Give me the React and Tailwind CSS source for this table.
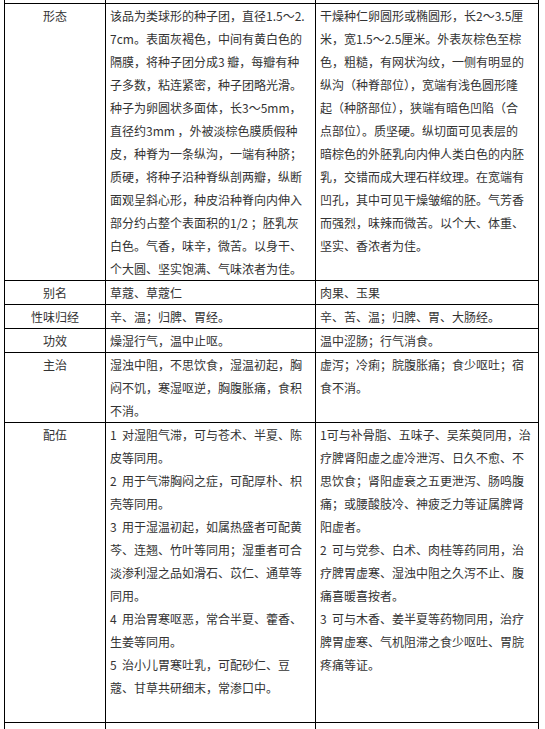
import React from 'react';

const rows = [
  {
    label: '形态',
    h: 'h-[276px]',
    mid: [
      '该品为类球形的种子团，直径1.5～2.',
      '7cm。表面灰褐色，中间有黄白色的',
      '隔膜，将种子团分成3 瓣，每瓣有种',
      '子多数，粘连紧密，种子团略光滑。',
      '种子为卵圆状多面体，长3～5mm，',
      '直径约3mm ，外被淡棕色膜质假种',
      '皮，种脊为一条纵沟，一端有种脐；',
      '质硬，将种子沿种脊纵剖两瓣，纵断',
      '面观呈斜心形，种皮沿种脊向内伸入',
      '部分约占整个表面积的1/2 ；胚乳灰',
      '白色。气香，味辛，微苦。以身干、',
      '个大圆、坚实饱满、气味浓者为佳。',
    ],
    right: [
      '干燥种仁卵圆形或椭圆形，长2～3.5厘',
      '米，宽1.5～2.5厘米。外表灰棕色至棕',
      '色，粗糙，有网状沟纹，一侧有明显的',
      '纵沟（种脊部位），宽端有浅色圆形隆',
      '起（种脐部位），狭端有暗色凹陷（合',
      '点部位）。质坚硬。纵切面可见表层的',
      '暗棕色的外胚乳向内伸人类白色的内胚',
      '乳，交错而成大理石样纹理。在宽端有',
      '凹孔，其中可见干燥皱缩的胚。气芳香',
      '而强烈，味辣而微苦。以个大、体重、',
      '坚实、香浓者为佳。',
    ],
  },
  { label: '别名', h: 'h-[23px]', mid: ['草蔻、草蔻仁'], right: ['肉果、玉果'] },
  {
    label: '性味归经',
    h: 'h-[23px]',
    mid: ['辛、温；归脾、胃经。'],
    right: ['辛、苦、温；归脾、胃、大肠经。'],
  },
  {
    label: '功效',
    h: 'h-[23px]',
    mid: ['燥湿行气，温中止呕。'],
    right: ['温中涩肠；行气消食。'],
  },
  {
    label: '主治',
    h: 'h-[69px]',
    mid: [
      '湿浊中阻，不思饮食，湿温初起，胸',
      '闷不饥，寒湿呕逆，胸腹胀痛，食积',
      '不消。',
    ],
    right: ['虚泻；冷痢；脘腹胀痛；食少呕吐；宿', '食不消。'],
  },
  {
    label: '配伍',
    h: 'h-[299px]',
    mid: [
      '1  对湿阻气滞，可与苍术、半夏、陈',
      '皮等同用。',
      '2  用于气滞胸闷之症，可配厚朴、枳',
      '壳等同用。',
      '3  用于湿温初起，如属热盛者可配黄',
      '芩、连翘、竹叶等同用；湿重者可合',
      '淡渗利湿之品如滑石、苡仁、通草等',
      '同用。',
      '4  用治胃寒呕恶，常合半夏、藿香、',
      '生姜等同用。',
      '5  治小儿胃寒吐乳，可配砂仁、豆',
      '蔻、甘草共研细末，常渗口中。',
    ],
    right: [
      '1可与补骨脂、五味子、吴茱萸同用，治',
      '疗脾肾阳虚之虚冷泄泻、日久不愈、不',
      '思饮食；肾阳虚衰之五更泄泻、肠鸣腹',
      '痛；或腰酸肢冷、神疲乏力等证属脾肾',
      '阳虚者。',
      '2  可与党参、白术、肉桂等药同用，治',
      '疗脾胃虚寒、湿浊中阻之久泻不止、腹',
      '痛喜暖喜按者。',
      '3  可与木香、姜半夏等药物同用，治疗',
      '脾胃虚寒、气机阻滞之食少呕吐、胃脘',
      '疼痛等证。',
    ],
  },
];

const Lines = ({ lines }) => (
  <>
    {lines.map((line, i) => (
      <div key={i} className="whitespace-pre">
        {line}
      </div>
    ))}
  </>
);

export default function App() {
  return (
    <div
      className="bg-white min-h-screen text-[12px] leading-[23px] text-[#333]"
      style={{ fontFamily: '"Microsoft YaHei", "Noto Sans CJK SC", "Noto Sans", sans-serif' }}
    >
      <div className="ml-[4px] w-[535px] border-l border-black">
        {/* tail of the row above */}
        <div className="flex border-b border-black h-[4px]">
          <div className="w-[101px] border-r border-black" />
          <div className="w-[210px] border-r border-black" />
          <div className="w-[223px] border-r border-black" />
        </div>

        {rows.map((row) => (
          <div key={row.label} className={`flex border-b border-black box-content ${row.h}`}>
            <div className="w-[101px] shrink-0 border-r border-black text-center">{row.label}</div>
            <div className="w-[210px] shrink-0 border-r border-black px-[4px]">
              <Lines lines={row.mid} />
            </div>
            <div className="w-[223px] shrink-0 border-r border-black px-[4px]">
              <Lines lines={row.right} />
            </div>
          </div>
        ))}

        {/* next row, cut off */}
        <div className="flex h-[40px]">
          <div className="w-[101px] border-r border-black" />
          <div className="w-[210px] border-r border-black" />
          <div className="w-[223px] border-r border-black" />
        </div>
      </div>
    </div>
  );
}
